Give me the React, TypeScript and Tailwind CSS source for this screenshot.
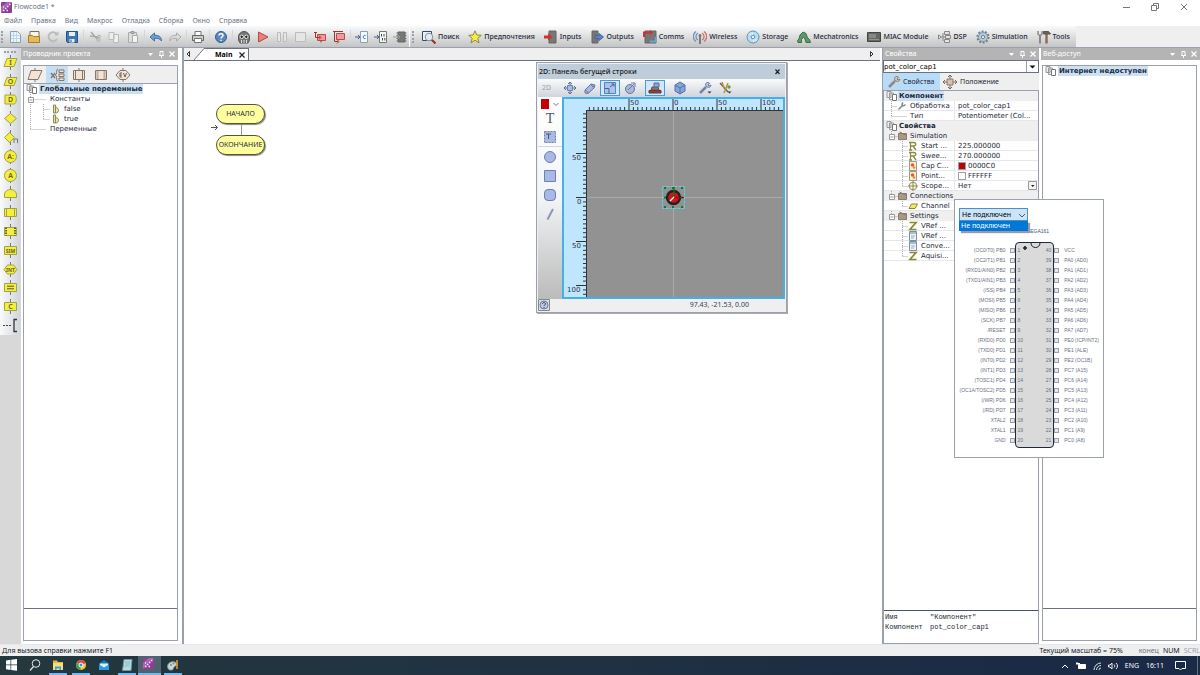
import type { ReactNode } from "react"

type IconProps = { children: ReactNode; w?: number; h?: number; box?: string }

const Icon = ({ children, w = 14, h = 14, box }: IconProps) => (
    <svg width={w} height={h} viewBox={box || `0 0 ${w} ${h}`} fill="none" stroke="#777" strokeWidth="1" className="shrink-0" aria-hidden="true">
        {children}
    </svg>
)

const Gear = () => (
    <Icon>
        <circle cx="7" cy="7" r="5.500" stroke="#6d7f8d" strokeWidth="2" strokeDasharray="2 1.400" />
        <circle cx="7" cy="7" r="4.500" fill="#b9cad6" stroke="#8297a5" />
        <circle cx="7" cy="7" r="1.600" fill="#eef3f6" stroke="#6d7f8d" />
    </Icon>
)

const Logo = ({ size = 11 }: { size?: number }) => (
    <Icon w={size} h={size} box="0 0 11 11">
        <rect width="11" height="11" rx="1" fill="#8d3f98" stroke="none" />
        <path d="M0 11V5L6 0h5L0 11z" fill="#ad65b8" stroke="none" />
        <path d="M2 8.500h1.500M4 6.500h1.500M6 4.500h1.500M8 2.500h1.500M5.500 8.500h1.500M2 5h1" stroke="#f5e5f8" strokeWidth="1.300" />
    </Icon>
)

const Copies = () => (
    <Icon w={12} h={10}>
        <path d="M1 .5h4v6H1zM3.500 2h4v6.500h-4z" fill="#eee" stroke="#999" />
        <path d="M6.500 3.500h4v6h-4z" fill="#fff" stroke="#777" />
    </Icon>
)

const fileIcons: { name: string; art: ReactNode }[][] = [
    [
        { name: "Новый", art: <><path d="M2.500 1.500h7l3 3v8h-10z" fill="#eaf4fb" stroke="#8aa0b0" /><path d="M5.500 2v10M8.500 2v10M3 5.500h9M3 8.500h9" stroke="#bcd6e8" /></> },
        { name: "Открыть", art: <><path d="M3 1.500h9v8H3z" fill="#f8f5ea" stroke="#77705c" /><path d="M1.500 5.500h4l1 1h6v6h-11z" fill="#e3bc55" stroke="#a4802b" /></> },
        { name: "Обновить", art: <><path d="M11 9a4.500 4.500 0 1 1 0-4.500" stroke="#bbb" strokeWidth="2" /><path d="M8 5.500h4.500V1z" fill="#bbb" stroke="none" /></> },
        { name: "Сохранить", art: <><path d="M1.500 1.500h11v11h-10l-1-1z" fill="#3d77b4" stroke="#23558c" /><path d="M4 2h6v4H4zM4.500 9h5v3.500h-5z" fill="#e8eef5" stroke="none" /><path d="M6 9.500v2.500" stroke="#23558c" /></> },
    ],
    [
        { name: "Вырезать", art: <><path d="M3 2l6 7M2 6l8 1" stroke="#aaa" strokeWidth="1.500" /><circle cx="10.500" cy="10" r="1.500" stroke="#aaa" /><circle cx="11" cy="6.500" r="1.300" stroke="#aaa" /></> },
        { name: "Копировать", art: <><path d="M2 2.500h5v7H2zM6.500 4.500h5v8h-5z" fill="#eee" stroke="#bbb" /></> },
        { name: "Вставить", art: <><path d="M2.500 2.500h8v10h-8z" fill="#ddd" stroke="#aaa" /><path d="M6.500 5.500h5v7h-5z" fill="#f4f4f4" stroke="#aaa" /><path d="M5 1.500h3v2H5z" fill="#bbb" stroke="#999" /></> },
    ],
    [
        { name: "Отменить", art: <path d="M1 7l4.500-4v2.300C10 5 12.500 7 12.500 11c-1.500-2.200-3.500-3-7-2.700V11z" fill="#6f9ed0" stroke="#41709f" /> },
        { name: "Вернуть", art: <path d="M13 7L8.500 3v2.300C4 5 1.500 7 1.500 11c1.500-2.200 3.500-3 7-2.700V11z" fill="#ddd" stroke="#aaa" /> },
    ],
    [
        { name: "Печать", art: <><path d="M4 1.500h6v4H4z" fill="#fff" stroke="#777" /><path d="M1.500 5.500h11v5h-11z" fill="#ccc" stroke="#666" /><path d="M3.500 8.500h7v4h-7z" fill="#fff" stroke="#777" /></> },
    ],
    [
        { name: "Справка", art: <><circle cx="7" cy="7" r="5.500" fill="#5b87bf" stroke="#355c90" /><path d="M5 5.500c0-2.300 4-2.300 4 0C9 7 7 7 7 8.500M7 9.700v1.200" stroke="#fff" strokeWidth="1.400" /></> },
    ],
    [
        { name: "Призрак", art: <><path d="M1.500 7a5.500 5.500 0 0 1 11 0v3l-1.500 3h-8l-1.500-3z" fill="#777" stroke="#555" /><path d="M4.500 10v3M7 10v3M9.500 10v3" stroke="#ddd" /><circle cx="4.700" cy="6.800" r="1.700" fill="#222" stroke="#eee" /><circle cx="9.300" cy="6.800" r="1.700" fill="#222" stroke="#eee" /></> },
        { name: "Пуск", art: <path d="M2.500 2l9.500 5-9.500 5z" fill="#ea7f7f" stroke="#c04545" /> },
        { name: "Пауза", art: <path d="M2.500 2.500h3v9h-3zM8.500 2.500h3v9h-3z" fill="#e6e6e6" stroke="#bbb" /> },
        { name: "Стоп", art: <path d="M1.500 2.500h10v9h-10z" fill="#e6e6e6" stroke="#bbb" /> },
        { name: "Шаг с заходом", art: <><path d="M4.500 4.500h8v6h-8z" fill="#f19a9a" stroke="#bb4b4b" /><path d="M1 2.500h3M2.500 2.500v5H7M6 5.500l2 2-2 2M8 12.500V10" stroke="#a23333" /></> },
        { name: "Шаг с обходом", art: <><path d="M4.500 3.500h8v6h-8z" fill="#f19a9a" stroke="#bb4b4b" /><path d="M1 1.500h10M2.500 1.500v10H6M5 9.500l2 2-2 2" stroke="#a23333" /></> },
    ],
    [
        { name: "Компилировать в C", art: <><path d="M5.500 1.500h7v11h-7z" fill="#f2f7fb" stroke="#8aa0b5" /><path d="M0 7h5M3 5l2 2-2 2M10.500 5.500c-3-1-3 4 0 3" stroke="#3a6593" /></> },
        { name: "Компилировать в HEX", art: <><path d="M5.500 1.500h7v11h-7z" fill="#f2f7fb" stroke="#777" /><path d="M0 7h5M3 5l2 2-2 2" stroke="#3a6593" /><path d="M7.500 4v2.500M10 4v2.500M8.500 8v2.500M10.800 8v2.500" stroke="#444" /></> },
        { name: "Компилировать в чип", art: <><path d="M5 2h7v10H5z" fill="#777" stroke="#666" /><path d="M3.500 3h10M3.500 5.500h10M3.500 8.500h10M3.500 11h10" stroke="#777" strokeDasharray="1.500 7" /><path d="M0 7h7M5 5l2 2-2 2" stroke="#999" /></> },
    ],
]

const chip = <><path d="M5 1h7v12H5z" fill="#777" stroke="#666" /><path d="M4 3h9M4 6h9M4 9h9M4 12h9" stroke="#999" strokeDasharray="1 7" /></>

const categories: { name: string; art: ReactNode }[] = [
    { name: "Поиск", art: <><path d="M.5 1.500h9v9h-9z" fill="#eef2f8" stroke="#334a6e" /><circle cx="7" cy="7" r="3.800" fill="#dcebf6" stroke="#8a9099" /><path d="M10 10l3.500 3.500" stroke="#a32626" strokeWidth="2" /></> },
    { name: "Предпочтения", art: <path d="M7 .8l1.800 4.200 4.500.3-3.500 3 1.200 4.500-4-2.500-4 2.500 1.200-4.500-3.500-3 4.500-.3z" fill="#f3ee4c" stroke="#8f8a35" /> },
    { name: "Inputs", art: <>{chip}<path d="M0 5.500h4V3.500L8.500 7 4 10.500v-2H0z" fill="#c93434" stroke="none" /></> },
    { name: "Outputs", art: <><path d="M2 1h6v12H2z" fill="#777" stroke="#666" /><path d="M5 5.500h4V3.500L13.500 7 9 10.500v-2H5z" fill="#5f82c0" stroke="#45649d" /></> },
    { name: "Comms", art: <><path d="M2 1h11v12H2z" fill="#777" stroke="#666" /><path d="M1 7V2.500h6.500" stroke="#c93434" strokeWidth="2.200" /><path d="M13 7v4.500H7" stroke="#6fa3dc" strokeWidth="2.200" /><path d="M7 0l3 2.500L7 5z" fill="#c93434" stroke="none" /></> },
    { name: "Wireless", art: <><path d="M5 3a4 4 0 0 0 0 7M3 1.500a6 6 0 0 0 0 10" stroke="#7191bd" strokeWidth="1.300" /><path d="M9 3a4 4 0 0 1 0 7M11 1.500a6 6 0 0 1 0 10" stroke="#d07070" strokeWidth="1.300" /><path d="M7 5v9" stroke="#666" strokeWidth="1.600" /><circle cx="7" cy="5.500" r="1.500" fill="#777" stroke="none" /></> },
    { name: "Storage", art: <><circle cx="7" cy="7" r="6" fill="#b9def1" stroke="#6292b5" /><path d="M7 7L3 3M7 7l4 4M7 7l-1-5M7 7l1 5" stroke="#e9f8ff" /><circle cx="7" cy="7" r="1.800" fill="#e8f2f8" stroke="#5b90b8" /></> },
    { name: "Mechatronics", art: <path d="M1 12.500h3.500v-3l2-2.500 1.500 2 1 3.500h4.500l-1-3-2-1.500-1.500-4.500-3-1.500-3 3-1 4-1.500 1.500z" fill="#5c9868" stroke="#3f6e49" /> },
    { name: "MIAC Module", art: <><path d="M.5 2.500h13v9H.5z" fill="#666" stroke="#444" /><path d="M2 5h7M2 7h7" stroke="#aaa" /><path d="M2 9.500h10" stroke="#7da37d" /></> },
    { name: "DSP", art: <><path d="M7.500 1.500h5v3h-5zM8.500 5.500h5v3h-5zM7.500 9.500h5v3h-5zM1.500 5l3 2-3 2z" fill="#e4e4e4" stroke="#888" /><path d="M4.500 7h4M6 3v8" stroke="#888" /></> },
    { name: "Simulation", art: <Gear /> },
    { name: "Tools", art: <><path d="M3 6v7.500" stroke="#888" strokeWidth="2" /><path d="M1 1v3l2 2 2-2V1" stroke="#888" strokeWidth="1.500" /><path d="M9.500 4v9.500" stroke="#8a6a50" strokeWidth="2.400" /><path d="M6.500 1.500h5l2 2.500h-7z" fill="#666" stroke="#555" /></> },
]

const tool = (name: string, shape: ReactNode, letter?: string) => ({ name, shape, letter })
const palette = [
    tool("Ввод", <path d="M5 4.500h10l-3 8H2z" />, "I"),
    tool("Вывод", <path d="M5 4.500h10l-3 8H2z" />, "O"),
    tool("Задержка", <path d="M3 4h9c3 0 3 9 0 9H3z" />, "D"),
    tool("Решение", <path d="M8.500 3.500l6 5-6 5-6-5z" />),
    tool("Переключатель", <><path d="M7.500 3.500l5 5-5 5-5-5z" /><path d="M12 14v-4h3.500v4" fill="none" stroke="#777" /></>),
    tool("Точка A:", <circle cx="8.500" cy="8.500" r="6" />, "A:"),
    tool("Точка A", <circle cx="8.500" cy="8.500" r="6" />, "A"),
    tool("Цикл", <path d="M2.500 12.500V9c1-6 11-6 12 0v3.500z" />),
    tool("Макрос", <><path d="M2.500 4.500h12v8h-12z" /><path d="M4.500 4.500v8M12.500 4.500v8" /></>),
    tool("Макрос компонента", <><path d="M2.500 4.500h12v8h-12z" /><path d="M4 4.500v8M13 4.500v8" strokeDasharray="1.500 1" strokeWidth="2" stroke="#66642e" /></>),
    tool("Симуляция", <path d="M2.500 4.500h12v8h-12z" />, "SIM"),
    tool("Прерывание", <path d="M5.500 4h6l3.500 4.500-3.500 4.500h-6L2 8.500z" />, "INT"),
    tool("Вычисление", <><path d="M2.500 4.500h12v8h-12z" /><path d="M5 7.200h7M5 9.800h7" stroke="#554" /></>),
    tool("Код C", <path d="M2.500 4.500h12v8h-12z" />, "C"),
]

const explorerTabs: { name: string; art: ReactNode }[] = [
    { name: "Порты", art: <path d="M4 3.500h11l-4 9H1zM8 1v2M8 12.500V15" /> },
    { name: "Переменные", art: <><path d="M2 6l4 5M6 6l-4 5" strokeWidth="1.400" /><path d="M9 2c-2 0-1 3-1.500 5L6 8l1.500 1c.5 2-.5 5 1.500 5M10 3h5v2.500h-5zM10 7h5v2.500h-5zM10 11h5v2.500h-5z" /></> },
    { name: "Макросы", art: <path d="M2.500 3.500h11v9h-11zM4.500 3.500v9M11.500 3.500v9M8 1v2M8 12.500V15" /> },
    { name: "Макросы компонентов", art: <><path d="M2.500 3.500h11v9h-11z" /><path d="M4.500 3.500v9M11.500 3.500v9" strokeWidth="2" strokeDasharray="1 1" /></> },
    { name: "События", art: <><path d="M5 3.500h6L15 8l-4 4.500H5L1 8zM8 1v2M8 12.500V15" /><path d="M7 6H5v4h2M5 8h2M8.500 6L10 10l1.500-4" stroke="#665" /></> },
]

const Grip = () => <i className="w-[3px] h-3 mx-px border-l-2 border-dotted border-gray-400" />

const PanelHead = ({ title }: { title: string }) => (
    <header className="flex h-3 shrink-0 items-center bg-[#b4b4b4] pl-0.5 pr-px text-white">
        <h2 className="grow">{title}</h2>
        <button aria-label="Меню панели"><Icon w={11} h={8}><path d="M3 3h5L5.500 6z" fill="#fff" stroke="none" /></Icon></button>
        <button aria-label="Закрепить"><Icon w={11} h={8}><path d="M4 5V1.500h3V5M3 5.500h5M5.500 5.500V8" stroke="#fff" /></Icon></button>
        <button aria-label="Закрыть панель"><Icon w={10} h={8}><path d="M2.500 1.500l5 5M7.500 1.500l-5 5" stroke="#fff" strokeWidth="1.200" /></Icon></button>
    </header>
)

const Branch = ({ w, last, box }: { w: number; last?: boolean; box?: boolean }) => (
    <Icon w={w} h={10}>
        <path d={`M3.500 0V${last ? 5 : 10}M3.500 5.500H${w}`} stroke="#aaa" strokeDasharray="1 1" />
        {box && <path d="M1.500 3.500h5v5h-5zM2.500 6h3" fill="#fff" stroke="#999" />}
    </Icon>
)

const ConstRow = ({ name, last }: { name: string; last?: boolean }) => (
    <div className="flex items-center pl-px">
        <Icon w={13} h={10}><path d="M3.500 0v10" stroke="#aaa" strokeDasharray="1 1" /></Icon>
        <Branch w={10} last={last} />
        <Icon w={12} h={10}><path d="M3.500 1v8h2V1zM5.500 3.500c4 0 4 5.500 0 5.500" fill="#e6e3b0" stroke="#8a8a52" /></Icon>
        <span className="pl-0.5">{name}</span>
    </div>
)

const propIcons = {
    wrench: <><path d="M1.500 8.500L6 4M6 1.500C4 4 6 6 8.500 3.500" stroke="#888" strokeWidth="1.600" /></>,
    real: <path d="M2.500 1v8M1 1.500h4.500c3 0 3 3.500 0 3.500h-3M5 5l3 4M1 9h3" stroke="#8a8a42" strokeWidth="1.300" />,
    color: <><path d="M1.500.5h7v9h-7z" fill="#f7f1b5" stroke="#999" /><circle cx="4.500" cy="4" r="1.700" fill="#dd5555" stroke="none" /><circle cx="6" cy="6.500" r="1.300" fill="#d98a5a" stroke="none" /></>,
    scope: <><circle cx="5" cy="5" r="3.800" fill="#f6f6d8" stroke="#8d8d62" /><path d="M5 0v10M0 5h10" stroke="#8d8d62" /></>,
    port: <path d="M3.500 3h6L7 7.500H1z" fill="#f0ee60" stroke="#88863a" />,
    int: <path d="M1.500 1.500h6.500L2 8.500h6.500" stroke="#8a8a32" strokeWidth="1.700" />,
    text: <><path d="M1.500.5h7v9h-7z" fill="#eef4fa" stroke="#7f8fa0" /><path d="M2 2h6" stroke="#5f86b3" /><path d="M3 5h4M3 7h3" stroke="#9ab" /></>,
}

type Row = { label: string; icon?: keyof typeof propIcons; value?: string; swatch?: string; pick?: boolean; last?: boolean }

const componentRows: Row[] = [
    { label: "Обработка", icon: "wrench", value: "pot_color_cap1" },
    { label: "Тип", value: "Potentiometer (Col...", last: true },
]

const groups: { title: string; rows: Row[] }[] = [
    {
        title: "Simulation",
        rows: [
            { label: "Start ...", icon: "real", value: "225.000000" },
            { label: "Swee...", icon: "real", value: "270.000000" },
            { label: "Cap C...", icon: "color", value: "0000C0", swatch: "bg-[#c00000]" },
            { label: "Point...", icon: "color", value: "FFFFFF", swatch: "bg-white" },
            { label: "Scope...", icon: "scope", value: "Нет", pick: true, last: true },
        ],
    },
    { title: "Connections", rows: [{ label: "Channel", icon: "port", last: true }] },
    {
        title: "Settings",
        rows: [
            { label: "VRef ...", icon: "int" },
            { label: "VRef ...", icon: "text" },
            { label: "Conve...", icon: "text" },
            { label: "Aquisi...", icon: "int", last: true },
        ],
    },
]

const PropRow = ({ row, deep }: { row: Row; deep?: boolean }) => (
    <div className="flex h-[10px] items-center border-b border-gray-200">
        <div className={deep ? "flex w-[70px] shrink-0 items-center overflow-hidden whitespace-nowrap pl-[15px]" : "flex w-[70px] shrink-0 items-center overflow-hidden whitespace-nowrap pl-1"}>
            <Branch w={row.icon ? 9 : 19} last={row.last} />
            {row.icon && <Icon w={10} h={10}>{propIcons[row.icon]}</Icon>}
            <span className="pl-[3px]">{row.label}</span>
        </div>
        <div className="flex h-[10px] min-w-0 grow items-center whitespace-nowrap border-l border-gray-200 pl-[3px]">
            {row.swatch && <i className={`mr-0.5 size-2 border border-gray-400 ${row.swatch}`} />}
            {row.pick ? (
                <label className="flex grow items-center">
                    <select aria-label={row.label} className="grow appearance-none outline-none">
                        <option>{row.value}</option>
                    </select>
                    <Icon w={10} h={10}><path d="M.5.5h8v8h-8z" fill="#f4f4f4" stroke="#999" /><path d="M3 4h3.500L4.700 6z" fill="#222" stroke="none" /></Icon>
                </label>
            ) : (
                <span>{row.value}</span>
            )}
        </div>
    </div>
)

const leftPins = ["(OC0/T0) PB0", "(OC2/T1) PB1", "(RXD1/AIN0) PB2", "(TXD1/AIN1) PB3", "(/SS) PB4", "(MOSI) PB5", "(MISO) PB6", "(SCK) PB7", "/RESET", "(RXD0) PD0", "(TXD0) PD1", "(INT0) PD2", "(INT1) PD3", "(TOSC1) PD4", "(OC1A/TOSC2) PD5", "(/WR) PD6", "(/RD) PD7", "XTAL2", "XTAL1", "GND"]
const rightPins = ["VCC", "PA0 (AD0)", "PA1 (AD1)", "PA2 (AD2)", "PA3 (AD3)", "PA4 (AD4)", "PA5 (AD5)", "PA6 (AD6)", "PA7 (AD7)", "PE0 (ICP/INT2)", "PE1 (ALE)", "PE2 (OC1B)", "PC7 (A15)", "PC6 (A14)", "PC5 (A13)", "PC4 (A12)", "PC3 (A11)", "PC2 (A10)", "PC1 (A9)", "PC0 (A8)"]

const Pad = () => <i className="size-[5px] border border-gray-400 bg-gray-200" />

const PinPopup = () => (
    <section className="absolute right-[96px] top-[199px] h-[259px] w-[150px] border border-gray-400 bg-white px-1 pt-2">
        <div className="relative w-[69px]">
            <label className="flex h-[13px] items-center border border-[#4a90c8] bg-[#cce4f7] pl-0.5">
                <select aria-label="Вывод" className="grow appearance-none text-black outline-none">
                    <option>Не подключен</option>
                </select>
                <Icon w={10} h={8}><path d="M2 3l3 3 3-3" stroke="#556" /></Icon>
            </label>
            <ul role="listbox" aria-label="Варианты" className="absolute inset-x-0 top-full z-10 border border-[#0078d7] bg-[#0078d7] pl-px leading-[8px] text-white shadow-[2px_2px_1px_#99a]">
                <li role="option" aria-selected="true">Не подключен</li>
            </ul>
        </div>
        <div className="font-['Liberation_Sans',sans-serif] text-[5px] text-gray-500">
            <p className="mt-1 h-[17px] pl-[61px] leading-[13px] text-gray-600">ATMEGA161</p>
            <div className="flex">
                <ul className="flex w-[56px] flex-col pt-[3px]">
                    {leftPins.map((pin) => (
                        <li key={pin} className="flex h-[10px] items-center justify-end gap-1 whitespace-nowrap">{pin}<Pad /></li>
                    ))}
                </ul>
                <div className="relative flex h-[206px] w-10 justify-between rounded border border-gray-800 bg-[#dadada] px-0.5 pt-0.5">
                    <svg width="38" height="8" className="absolute left-0 top-0" fill="none" stroke="#222" aria-hidden="true">
                        <path d="M15 0c0 6 9 6 9 0" />
                        <path d="M9 3v4M7 5h4" strokeWidth="1.600" />
                    </svg>
                    <ol>{leftPins.map((pin, i) => <li key={pin} className="h-[10px] leading-[10px]">{i + 1}</li>)}</ol>
                    <ol>{rightPins.map((pin, i) => <li key={pin} className="h-[10px] leading-[10px]">{40 - i}</li>)}</ol>
                </div>
                <ul className="flex flex-col pt-[3px]">
                    {rightPins.map((pin) => (
                        <li key={pin} className="flex h-[10px] items-center gap-[5px] whitespace-nowrap"><Pad />{pin}</li>
                    ))}
                </ul>
            </div>
        </div>
    </section>
)

const ticks = Array.from({ length: 44 }, (_, i) => i - 19)

const Stage = () => (
    <svg width="223" height="202" viewBox="0 0 223 202" className="block" aria-label="Холст">
        <rect x="1" y="1" width="221" height="200" fill="#bfe5ff" stroke="#45b0e4" strokeWidth="2" />
        <rect x="24" y="13" width="197" height="187" fill="#929292" />
        <g stroke="#333">
            {ticks.map((t) => <path key={t} d={`M${111 + t * 4.4} 13v${t % 10 ? -3 : -11}`} />)}
            {ticks.filter((t) => t < 23).map((t) => <path key={t} d={`M24 ${100.5 + t * 4.4}h${t % 10 ? -3 : -10}`} />)}
            <path d="M24 13.500h197M24.500 13v187" />
        </g>
        <path d="M111.500 14v186M25 100.500h196" stroke="#aaa" />
        <g fill="#334" className="font-['DejaVu_Sans',sans-serif] text-[7px]">
            <text x="68" y="8">50</text>
            <text x="112" y="8">0</text>
            <text x="156" y="8">50</text>
            <text x="200" y="8">100</text>
            <text x="10" y="63">50</text>
            <text x="15" y="107">0</text>
            <text x="10" y="151">50</text>
            <text x="5" y="195">100</text>
        </g>
        <rect x="100.500" y="89.500" width="22" height="22" fill="none" stroke="#5ed3d0" strokeDasharray="3 1" />
        <path d="M102 91h2M110 91h2M119 91h2M102 100.500h2M119 100.500h2M102 110h2M110 110h2M119 110h2" stroke="#075" strokeWidth="2" />
        <circle cx="111.500" cy="100.500" r="6.500" fill="#d01414" stroke="#222" strokeWidth="2.400" />
        <path d="M112 90v10" stroke="#157015" strokeWidth="1.300" />
        <path d="M112 100.500h10" stroke="#901010" />
        <path d="M108 104l4-4" stroke="#fff" strokeWidth="1.300" />
    </svg>
)

const stageTools: { name: string; art: ReactNode; on?: boolean; sep?: boolean }[] = [
    { name: "Переместить", art: <><path d="M7 1v12M1 7h12M5 3l2-2 2 2M5 11l2 2 2-2M3 5L1 7l2 2M11 5l2 2-2 2" stroke="#5c6d8d" /><path d="M4.500 4.500h5v5h-5z" fill="#a9bbe4" stroke="#6c80b0" /></> },
    { name: "Повернуть", art: <><path d="M2 9l6-6 4 1-1 3-6 5.500-3-.5z" fill="#a9b7dd" stroke="#66769c" /><path d="M8 3l2 3 2-1M2.500 9l3 3" stroke="#66769c" /></> },
    { name: "Масштаб", on: true, art: <><path d="M1.500 1.500h11v11h-11z" fill="#a9c4ec" stroke="#5d82bb" /><path d="M2 7.500h4v5M7 6l4-3M8.500 3H11v2.500" stroke="#44608c" /></> },
    { name: "Наклон", art: <><circle cx="7" cy="8" r="4.500" fill="#a9b7dd" stroke="#66769c" /><path d="M8 2h4v4M5 9l6-6" stroke="#66769c" /></> },
    { name: "Штамп", on: true, sep: true, art: <><path d="M1 12V9.500h12V12z" fill="#7a4c40" stroke="#5e372d" /><path d="M3 9l1-3h6l1 3z" fill="#9a7268" stroke="#6f4c42" /><path d="M6 2h5v4H6z" fill="#8ba6d2" stroke="#53719f" /></> },
    { name: "Куб", sep: true, art: <><path d="M7 1l5 3v6l-5 3-5-3V4z" fill="#87a3da" stroke="#5671a8" /><path d="M2 4l5 3 5-3M7 7v6" stroke="#5671a8" /></> },
    { name: "Настройка", sep: true, art: <><path d="M2 12l6-6" stroke="#7586a5" strokeWidth="2.500" /><path d="M11.500 2C8 0 6 4 9 6c2 1 4 0 4-2l-2 1-1-1z" fill="#bdc9df" stroke="#6c7c99" /><path d="M9.500 10.500h4l-2 2z" fill="#333" stroke="none" /></> },
    { name: "Инструменты", art: <><path d="M2 2l8 9" stroke="#666" strokeWidth="1.500" /><path d="M10 2l-4 10M4 1l2 6" stroke="#b8923c" strokeWidth="1.500" /><circle cx="11" cy="6" r="1.700" fill="#6a9d4a" stroke="none" /><path d="M9.500 10.500h4l-2 2z" fill="#333" stroke="none" /></> },
]

const shapes: { name: string; art: ReactNode }[] = [
    { name: "Область", art: <><path d="M1.500 1.500h11v11h-11z" fill="#a9b9e6" stroke="#7080a8" strokeDasharray="2 1" /><path d="M3 4h5M5.500 4v5" stroke="#556" /></> },
    { name: "Эллипс", art: <circle cx="7" cy="7" r="5.500" fill="#a9b9e6" stroke="#7080a8" /> },
    { name: "Прямоугольник", art: <path d="M1.500 1.500h11v11h-11z" fill="#a9b9e6" stroke="#7080a8" /> },
    { name: "Скругление", art: <rect x="1.500" y="1.500" width="11" height="11" rx="3.500" fill="#a9b9e6" stroke="#7080a8" /> },
    { name: "Линия", art: <path d="M4.500 12.500L10 2" stroke="#8b97b8" strokeWidth="2" /> },
]

const StageWindow = () => (
    <section className="absolute left-[352px] top-px border border-gray-400 bg-[#efefef] p-px shadow-[1px_1px_0_#aaa]">
        <header className="flex h-[15px] items-center bg-[#bfcddb] px-px text-[#222]">
            <h2 className="grow font-['Open_Sans',sans-serif] font-semibold">2D: Панель бегущей строки</h2>
            <button aria-label="Закрыть окно"><Icon w={12} h={8}><path d="M3.500 1.500l4 4.500M7.500 1.500l-4 4.500" stroke="#222" strokeWidth="1.200" /></Icon></button>
        </header>
        <div className="flex h-[18px] items-center bg-linear-to-b from-gray-50 to-gray-300">
            <span className="w-[22px] pl-1 text-gray-400">2D</span>
            {stageTools.map((item) => (
                <button key={item.name} aria-label={item.name} className={`flex h-4 w-5 items-center justify-center border ${item.sep ? "ml-[5px]" : ""} ${item.on ? "border-[#4a9ad4] bg-[#d3e7f8]" : "border-transparent"}`}>
                    <Icon>{item.art}</Icon>
                </button>
            ))}
        </div>
        <div className="flex">
            <div className="flex w-6 flex-col items-center bg-linear-to-b from-white via-gray-100 to-[#bbb]">
                <button aria-label="Цвет" className="flex h-[13px] items-center gap-[3px]">
                    <i className="h-[10px] w-2 bg-[#c80000]" />
                    <Icon w={8} h={8}><path d="M1.500 3L4 5.500 6.500 3" /></Icon>
                </button>
                <button aria-label="Текст" className="h-[18px] font-['Liberation_Serif',serif] text-[14px] leading-none text-gray-600">T</button>
                {shapes.map((item, i) => (
                    <button key={item.name} aria-label={item.name} className={i ? "flex h-[19px] w-full items-center justify-center" : "flex h-[19px] w-full items-center justify-center border-b border-gray-300"}>
                        <Icon>{item.art}</Icon>
                    </button>
                ))}
            </div>
            <Stage />
        </div>
        <footer className="flex h-3 items-center justify-between pr-9 text-gray-700">
            <button aria-label="Помощь"><Icon w={12} h={12}><path d="M.5.5h11v11H.5z" fill="#ddd" stroke="#888" /><circle cx="6" cy="6" r="4" fill="#bccbe0" stroke="#6b7f9e" /><path d="M4.500 5c0-2 3-2 3 0 0 1-1.500 1-1.500 2M6 8v1" stroke="#345" /></Icon></button>
            <output>97.43, -21.53, 0.00</output>
        </footer>
    </section>
)

const taskApps: { name: string; art: ReactNode; open?: boolean; active?: boolean }[] = [
    { name: "Пуск", art: <path d="M1 2.500l4.500-.7v4.700H1zM6.200 1.700L12 1v5.500H6.200zM1 7.200h4.500V12L1 11.300zM6.200 7.200H12v5.600L6.200 12z" fill="#fff" stroke="none" /> },
    { name: "Поиск", art: <><circle cx="8" cy="5.500" r="3.800" stroke="#e8e8e8" /><path d="M5.500 8.500L2 12.500" stroke="#e8e8e8" strokeWidth="1.200" /></> },
    { name: "Проводник", open: true, art: <><path d="M2 2.500h4l1 1.500h5v8H2z" fill="#e7b83e" stroke="none" /><path d="M2 5h10v7H2z" fill="#f8dc83" stroke="none" /><path d="M4 8.500h6V12H8.500v-1.500h-3V12H4z" fill="#479bcf" stroke="none" /></> },
    { name: "Chrome", open: true, art: <><circle cx="7" cy="7" r="5" fill="#f0c83b" stroke="none" /><path d="M7 7L2.700 4.500A5 5 0 0 1 11.700 5z" fill="#dd4b3e" stroke="none" /><path d="M7 7L2.500 4.700A5 5 0 0 0 6.500 12z" fill="#3f9f55" stroke="none" /><circle cx="7" cy="7" r="2" fill="#4688e8" stroke="#fff" /></> },
    { name: "Почта", art: <><path d="M2 5.500L7 2l5 3.500V12H2z" fill="#1378c4" stroke="none" /><path d="M3 5.500h8v2L7 10 3 7.500z" fill="#dff0fa" stroke="none" /><path d="M2 6.500L7 9.500l5-3V12H2z" fill="#2f9be2" stroke="none" /></> },
    { name: "Блокнот", open: true, art: <><path d="M4 1.500h8l-1 11H2.500z" fill="#b8dbe0" stroke="#6b9ba3" /><path d="M5 4h5M5 6h5M4.500 8h5" stroke="#8dbac2" /></> },
    { name: "Flowcode", open: true, active: true, art: <Logo /> },
    { name: "Paint", open: true, art: <><path d="M2 10c-2-5 5-8 8-5 2 2-1 3-2 4s0 3-3 3-3-2-3-2z" fill="#c9d8db" stroke="#8a9ea2" /><circle cx="5" cy="7" r="1" fill="#56a860" stroke="none" /><circle cx="7.500" cy="5.500" r="1" fill="#d86b45" stroke="none" /><path d="M11 2v9" stroke="#dd9b36" strokeWidth="1.600" /></> },
]

const menus = ["Файл", "Правка", "Вид", "Макрос", "Отладка", "Сборка", "Окно", "Справка"]

const App: React.FC = () => {
    return (
        <div className="relative flex h-screen flex-col overflow-hidden bg-white font-['Noto_Sans',sans-serif] text-[7px] leading-[10px] text-gray-800">
            <header className="flex h-[14px] shrink-0 items-center pl-px">
                <Logo />
                <h1 className="grow pl-0.5 text-gray-500">Flowcode1 *</h1>
                <button aria-label="Свернуть" className="w-[28px]"><Icon w={8} h={8}><path d="M0 4.500h7" /></Icon></button>
                <button aria-label="Восстановить" className="w-[29px]"><Icon w={8} h={8}><path d="M.5 2.500h5v5h-5zM2.500 2V.5h5v5H6" /></Icon></button>
                <button aria-label="Закрыть" className="w-5"><Icon w={8} h={8}><path d="M1 1l6 6M7 1L1 7" /></Icon></button>
            </header>
            <nav className="flex h-3 shrink-0 items-end gap-[9px] pl-1 text-gray-500">
                {menus.map((menu) => <button key={menu}>{menu}</button>)}
            </nav>

            <div className="flex h-[22px] shrink-0 border-b border-gray-400 bg-[#efefef]">
                <div className="flex items-center bg-linear-to-b from-gray-50 to-[#c4c4c4]">
                    <Grip />
                    {fileIcons.map((group, i) => (
                        <div key={i} className={i ? "ml-0.5 flex border-l border-gray-300 pl-px" : "flex"}>
                            {group.map((item) => (
                                <button key={item.name} aria-label={item.name} className="flex w-[19px] justify-center"><Icon>{item.art}</Icon></button>
                            ))}
                        </div>
                    ))}
                </div>
                <div className="flex items-center gap-[9px] border-l border-white bg-linear-to-b from-gray-50 to-[#c4c4c4] pl-px pr-[6px]">
                    {categories.map((item, i) => (
                        <button key={item.name} className="flex items-center gap-0.5 font-medium">
                            {i === 0 && <><Grip /><i className="w-0.5" /></>}
                            <Icon>{item.art}</Icon>
                            {item.name}
                        </button>
                    ))}
                </div>
            </div>

            <main className="flex min-h-0 grow">
                <aside className="w-[21px] shrink-0 bg-[#d8d8d8] pr-px">
                    <div className="bg-linear-to-r from-gray-50 to-gray-300">
                        <i className="ml-1 block h-[5px] w-3 border-b-2 border-dotted border-gray-400" />
                        <div className="flex h-[282px] flex-col items-center justify-around">
                            {palette.map((item) => (
                                <button key={item.name} aria-label={item.name}>
                                    <svg width="17" height="17" viewBox="0 0 17 17" fill="#f4ee3c" stroke="#a5a145" className="block">
                                        <path d="M8.500 1v15" stroke="#777" />
                                        {item.shape}
                                        {item.letter && <text x="8.500" y="11" textAnchor="middle" fill="#66622a" stroke="none" className={item.letter.length > 2 ? "text-[5px] font-bold" : "text-[7px] font-semibold"}>{item.letter}</text>}
                                    </svg>
                                </button>
                            ))}
                            <button aria-label="Комментарий"><Icon w={17} h={17}><path d="M1 8.500h9" stroke="#444" strokeDasharray="2 1" /><path d="M15 2.500h-3v12h3" stroke="#333" strokeWidth="1.300" /></Icon></button>
                        </div>
                    </div>
                </aside>

                <aside className="flex w-[157px] shrink-0 flex-col pb-[3px]">
                    <PanelHead title="Проводник проекта" />
                    <div className="ml-0.5 mt-[5px] flex grow flex-col border border-gray-400">
                        <div className="flex h-[18px] border-b border-gray-400 bg-[#efefef]">
                            {explorerTabs.map((tab, i) => (
                                <button key={tab.name} aria-label={tab.name} className={i === 1 ? "flex w-[22px] items-center justify-center bg-[#c4dff5]" : "flex w-[22px] items-center justify-center"}>
                                    <svg width="16" height="16" viewBox="0 0 16 16" fill="#f2e3d6" stroke="#83776c">{tab.art}</svg>
                                </button>
                            ))}
                        </div>
                        <div className="grow pl-0.5 font-['DejaVu_Sans',sans-serif]">
                            <div className="flex items-center gap-px"><Copies /><strong className="bg-[#cbe0f3] px-px">Глобальные переменные</strong></div>
                            <div className="flex items-center gap-1 pl-px"><Branch w={19} box />Константы</div>
                            <ConstRow name="false" />
                            <ConstRow name="true" last />
                            <div className="flex items-center gap-1 pl-px"><Branch w={19} last />Переменные</div>
                        </div>
                        <div className="h-8 border-t border-gray-500" />
                    </div>
                </aside>

                <section className="ml-1 flex min-w-0 grow flex-col border-l-2 border-gray-400">
                    <div className="flex h-[13px] shrink-0 items-end justify-between border-b border-gray-500 bg-[#efefef]">
                        <div className="flex items-end">
                            <button aria-label="Назад"><Icon w={9} h={12}><path d="M5.500 3.500v5L3 6z" stroke="#333" /></Icon></button>
                            <Icon w={14} h={12}><path d="M1 12L11 1h3v11z" fill="#fff" stroke="none" /><path d="M1 12L11 .5h3" stroke="#777" /></Icon>
                            <div className="flex h-3 items-center gap-[6px] border-r border-t border-gray-500 bg-white pl-2 pr-0.5 text-black">
                                <strong>Main</strong>
                                <button aria-label="Закрыть вкладку"><Icon w={8} h={8}><path d="M1.500 1.500l5 5M6.500 1.500l-5 5" stroke="#222" strokeWidth="1.200" /></Icon></button>
                            </div>
                        </div>
                        <button aria-label="Вперёд"><Icon w={14} h={12}><path d="M4.500 3.500v5L7 6z" stroke="#333" /></Icon></button>
                    </div>
                    <div className="relative grow">
                        <svg width="40" height="20" className="absolute left-[26px] top-[60px]" fill="none" stroke="#555" aria-hidden="true">
                            <path d="M1 6.500h6M5 4l2.500 2.500L5 9" />
                            <path d="M31.500 0v20" stroke="#999" />
                        </svg>
                        <div className="absolute left-8 top-[43px] flex h-5 w-[49px] items-center justify-center rounded-full border border-[#555530] bg-[#ffffa0] shadow-[1px_1px_1px_#888]">НАЧАЛО</div>
                        <div className="absolute left-8 top-[74px] flex h-5 w-[49px] items-center justify-center rounded-full border border-[#555530] bg-[#ffffa0] shadow-[1px_1px_1px_#888]">ОКОНЧАНИЕ</div>
                        <StageWindow />
                    </div>
                </section>

                <aside className="ml-[2px] flex w-[157px] shrink-0 flex-col border-l border-gray-400">
                    <PanelHead title="Свойства" />
                    <label className="flex h-[13px] items-center border border-gray-500 text-black">
                        <select aria-label="Компонент" className="grow appearance-none font-['DejaVu_Sans',sans-serif] outline-none">
                            <option>pot_color_cap1</option>
                        </select>
                        <span className="border-l border-gray-400"><Icon w={11} h={11}><path d="M2.500 4.500h6l-3 3z" fill="#111" stroke="none" /></Icon></span>
                    </label>
                    <div className="flex h-[17px] bg-[#efefef]">
                        <button className="flex w-[57px] items-center gap-0.5 bg-[#b8dcf8] pl-1"><Icon><path d="M2 12l6-6" stroke="#998676" strokeWidth="2.500" /><path d="M11.500 2C8 0 6 4 9 6c2 1 4 0 4-2l-2 1-1-1z" fill="#d8c8ba" stroke="#8c7a6b" /></Icon>Свойства</button>
                        <button className="flex items-center gap-[3px] pl-[3px]"><Icon><path d="M7 0v14M0 7h14M5 2l2-2 2 2M5 12l2 2 2-2M2 5L0 7l2 2M12 5l2 2-2 2" stroke="#766a60" /><path d="M4 4h6v6H4z" fill="#d8bfae" stroke="#8c7a6b" /></Icon>Положение</button>
                    </div>
                    <div className="flex grow flex-col border border-gray-400">
                        <div className="grow font-['DejaVu_Sans',sans-serif]">
                            <h3 className="flex items-center bg-[#efefef] pl-0.5 font-bold"><Copies /><span className="bg-[#cbe0f3] px-px">Компонент</span></h3>
                            {componentRows.map((row) => <PropRow key={row.label} row={row} />)}
                            <h3 className="flex items-center bg-[#efefef] pl-0.5 font-bold"><Copies /><span className="px-px">Свойства</span></h3>
                            {groups.map((group) => (
                                <div key={group.title}>
                                    <h4 className="flex items-center bg-[#efefef] pl-1"><Branch w={10} box /><Icon w={10} h={10}><path d="M.5 2.500h8v6h-8z" fill="#a99a88" stroke="#8b7d6e" /><path d="M1.500 1l6 3" stroke="#776" /></Icon><span className="pl-0.5">{group.title}</span></h4>
                                    {group.rows.map((row, i) => <PropRow key={i} row={row} deep />)}
                                </div>
                            ))}
                        </div>
                        <dl className="grid h-[33px] grid-cols-[45px_1fr] content-start border-t border-gray-600 pl-px pt-px font-['Liberation_Mono',monospace]">
                            <dt>Имя</dt><dd>"Компонент"</dd>
                            <dt>Компонент</dt><dd>pot_color_cap1</dd>
                        </dl>
                    </div>
                </aside>

                <aside className="flex w-[161px] shrink-0 flex-col pb-[3px] pl-0.5">
                    <PanelHead title="Веб-доступ" />
                    <div className="ml-px mr-[3px] mt-[5px] flex grow flex-col border border-gray-400">
                        <div className="flex grow items-start gap-px pl-0.5 font-['DejaVu_Sans',sans-serif]"><Copies /><strong className="bg-[#cbe0f3] px-px">Интернет недоступен</strong></div>
                        <div className="h-8 border-t border-gray-500" />
                    </div>
                </aside>
            </main>

            <footer className="flex h-3 shrink-0 items-center border-t border-gray-200 bg-[#efefef] pl-0.5 text-gray-900">
                <p className="grow">Для вызова справки нажмите F1</p>
                <p className="pr-4">Текущий масштаб = 75%</p>
                <p className="pr-1 text-gray-500">конец</p>
                <p className="pr-1">NUM</p>
                <p className="text-gray-400">SCRL</p>
            </footer>

            <nav className="flex h-[19px] shrink-0 items-center bg-linear-to-r from-[#24383e] to-[#1a2946] text-white">
                {taskApps.map((app) => (
                    <button key={app.name} aria-label={app.name} className={app.active ? "flex h-full w-[23px] flex-col items-center bg-[#50636c]" : "flex h-full w-[23px] flex-col items-center"}>
                        <span className="flex grow items-center"><Icon>{app.art}</Icon></span>
                        <i className={app.open ? (app.active ? "h-0.5 w-full bg-[#76b9ed]" : "h-0.5 w-[18px] bg-[#76b9ed]") : "h-0.5"} />
                    </button>
                ))}
                <div className="flex grow items-center justify-end gap-[7px]">
                    <Icon w={8} h={8}><path d="M1 6l3-3 3 3" stroke="#fff" /></Icon>
                    <Icon w={10} h={8}><path d="M2.500 2.500h7v4h-7z" fill="#fff" stroke="#fff" /><path d="M0 1.500h4M1 0v3" stroke="#fff" /></Icon>
                    <Icon w={8} h={8}><path d="M1 8a7 7 0 0 1 7-7M3.500 8A4.500 4.500 0 0 1 8 3.500M6 8a2 2 0 0 1 2-2" stroke="#ddd" /></Icon>
                    <Icon w={10} h={8}><path d="M.5 3h1.500l2-2v6L2 5H.5zM6 2.500c1 1 1 2 0 3M8 1c2 2 2 4 0 6" stroke="#eee" /></Icon>
                    <span>ENG</span>
                    <time>16:11</time>
                    <button aria-label="Уведомления" className="mx-1"><Icon w={11} h={11}><path d="M.5 1.500h10v7H7L5.500 10 4 8.500H.5z" stroke="#fff" /></Icon></button>
                    <i className="h-[19px] w-[3px] border-l border-gray-500" />
                </div>
            </nav>

            <PinPopup />
        </div>
    )
}

export default App
